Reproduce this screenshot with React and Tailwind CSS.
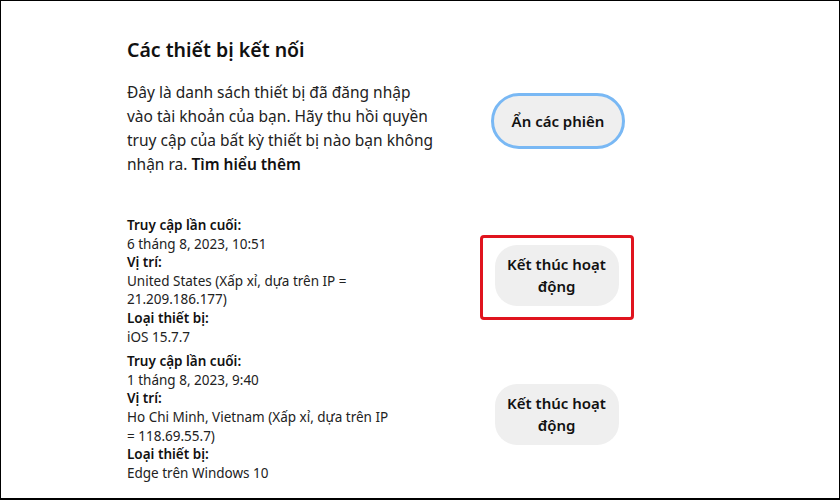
import React from "react";

const font = { fontFamily: '"Noto Sans", "Open Sans", sans-serif' };

function Session({ time, location, device, boxed, btnShift }) {
  const btn = (
    <button className="w-[124px] h-[61px] rounded-[22px] bg-[#efefef] text-[15px] leading-[22px] font-semibold text-[#111]">
      Kết thúc hoạt<br />động
    </button>
  );
  return (
    <div className="flex items-center">
      <div className="w-[265px] text-[13.5px] leading-[18.6px] text-[#222]">
        <div className="font-semibold text-[#111]">Truy cập lần cuối:</div>
        <div>{time}</div>
        <div className="font-semibold text-[#111]">Vị trí:</div>
        <div>{location}</div>
        <div className="font-semibold text-[#111]">Loại thiết bị:</div>
        <div>{device}</div>
      </div>
      <div className={"ml-[89px] w-[151px] flex justify-center " + (btnShift ? "-mt-[8px]" : "-mt-[6px]")}>
        {boxed ? (
          <div className="border-[3px] border-[#e0141e] rounded-[4px] px-[12px] pt-[7px] pb-[11px]">{btn}</div>
        ) : (
          btn
        )}
      </div>
    </div>
  );
}

export default function App() {
  return (
    <div className="w-[840px] h-[500px] bg-white border border-black border-b-2 overflow-hidden" style={font}>
      <div className="pl-[126px] pt-[35px]">
        <h1 className="text-[19.5px] leading-[28px] font-semibold text-[#111]">Các thiết bị kết nối</h1>
        <div className="flex items-start mt-[16px]">
          <p className="w-[310px] text-[15.5px] leading-[24px] text-[#222]">
            Đây là danh sách thiết bị đã đăng nhập vào tài khoản của bạn. Hãy thu hồi quyền truy cập của bất kỳ thiết bị nào bạn không nhận ra. <span className="font-semibold text-[#111]">Tìm hiểu thêm</span>
          </p>
          <div className="ml-[54px] mt-[13px]">
            <button className="w-[134px] h-[56px] rounded-full border-[3px] border-[#79b8f4] bg-[#efefef] text-[15px] font-semibold text-[#111]">
              Ẩn các phiên
            </button>
          </div>
        </div>
        <div className="mt-[40px] flex flex-col gap-[6px]">
          <Session
            time="6 tháng 8, 2023, 10:51"
            location="United States (Xấp xỉ, dựa trên IP = 21.209.186.177)"
            device="iOS 15.7.7"
            boxed
            btnShift
          />
          <Session
            time="1 tháng 8, 2023, 9:40"
            location="Ho Chi Minh, Vietnam (Xấp xỉ, dựa trên IP = 118.69.55.7)"
            device="Edge trên Windows 10"
          />
        </div>
      </div>
    </div>
  );
}
